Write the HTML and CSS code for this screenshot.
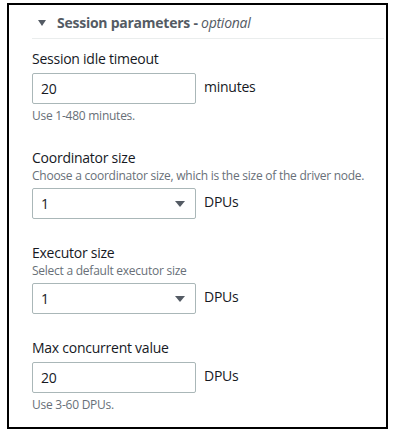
FILE: index.html
```html
<!doctype html>
<html lang="en">
  <head>
    <meta charset="UTF-8" />
    <title>Session parameters</title>
    <link rel="stylesheet" href="styles.css">
  </head>
  <body>
    <div class="panel">
      <div class="section-header">
        <span class="caret"></span>
        <span class="section-title">Session parameters - <em>optional</em></span>
      </div>

      <div class="field">
        <label class="field-label">Session idle timeout</label>
        <div class="field-row">
          <div class="control">20</div>
          <span class="unit">minutes</span>
        </div>
        <p class="hint">Use 1-480 minutes.</p>
      </div>

      <div class="field">
        <label class="field-label">Coordinator size</label>
        <p class="description">Choose a coordinator size, which is the size of the driver node.</p>
        <div class="field-row">
          <div class="control select">1<span class="select-caret"></span></div>
          <span class="unit">DPUs</span>
        </div>
      </div>

      <div class="field">
        <label class="field-label">Executor size</label>
        <p class="description">Select a default executor size</p>
        <div class="field-row">
          <div class="control select">1<span class="select-caret"></span></div>
          <span class="unit">DPUs</span>
        </div>
      </div>

      <div class="field">
        <label class="field-label">Max concurrent value</label>
        <div class="field-row">
          <div class="control">20</div>
          <span class="unit">DPUs</span>
        </div>
        <p class="hint">Use 3-60 DPUs.</p>
      </div>
    </div>
  </body>
</html>
```

FILE: styles.css
```css
* {
  margin: 0;
  padding: 0;
  box-sizing: border-box;
}

body {
  font-family: 'Open Sans', 'Noto Sans', sans-serif;
  letter-spacing: -0.25px;
  background: #fff;
  color: #16191f;
}

.panel {
  margin: 3px 8px 0 7px;
  height: 426px;
  border: 2px solid #000;
  padding: 0 2px 0 23px;
}

.section-header {
  display: flex;
  align-items: center;
  height: 34px;
  padding: 2px 0 0 6px;
  border-bottom: 1px solid #eaeded;
}

.caret {
  width: 0;
  height: 0;
  border-left: 4px solid transparent;
  border-right: 4px solid transparent;
  border-top: 6px solid #545b64;
  margin-right: 11px;
}

.section-title {
  font-size: 14px;
  font-weight: 700;
  color: #545b64;
}

.section-title em {
  font-weight: 400;
}

.field {
  margin-top: 10px;
}

.field + .field {
  margin-top: 24px;
}

.field-label {
  display: block;
  font-size: 14px;
  line-height: 20px;
  color: #16191f;
}

.description {
  font-size: 12px;
  line-height: 16px;
  color: #687078;
}

.field-row {
  display: flex;
  align-items: flex-start;
  margin-top: 4px;
}

.control {
  width: 164px;
  height: 31px;
  border: 1px solid #aab7b8;
  border-radius: 2px;
  padding: 0 8px;
  font-size: 14px;
  line-height: 31px;
  display: flex;
  align-items: center;
  justify-content: space-between;
}

.select-caret {
  width: 0;
  height: 0;
  border-left: 5px solid transparent;
  border-right: 5px solid transparent;
  border-top: 6px solid #545b64;
  margin-right: 2px;
}

.unit {
  font-size: 14px;
  line-height: 28px;
  margin-left: 8px;
}

.hint {
  font-size: 12px;
  line-height: 16px;
  color: #687078;
  margin-top: 4px;
}
```
